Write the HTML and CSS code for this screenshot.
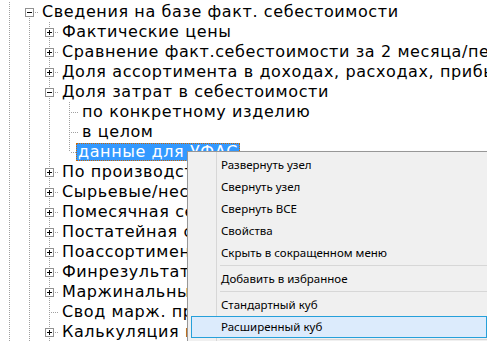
FILE: index.html
```html
<!DOCTYPE html>
<html lang="ru">
<head>
  <meta charset="UTF-8">
  <title>Дерево отчетов</title>
  <link rel="stylesheet" href="styles.css">
</head>
<body>
  <div class="tree">
    <div class="row"><span class="g v"></span><span class="g first"><i class="box minus"></i></span><span class="label">Сведения на базе факт. себестоимости</span></div>
    <div class="row"><span class="g v"></span><span class="g v"></span><span class="g tee"><i class="box plus"></i></span><span class="label">Фактические цены</span></div>
    <div class="row"><span class="g v"></span><span class="g v"></span><span class="g tee"><i class="box plus"></i></span><span class="label">Сравнение факт.себестоимости за 2 месяца/периода</span></div>
    <div class="row"><span class="g v"></span><span class="g v"></span><span class="g tee"><i class="box plus"></i></span><span class="label">Доля ассортимента в доходах, расходах, прибыли по месяцам</span></div>
    <div class="row"><span class="g v"></span><span class="g v"></span><span class="g tee"><i class="box minus"></i></span><span class="label">Доля затрат в себестоимости</span></div>
    <div class="row"><span class="g v"></span><span class="g v"></span><span class="g v"></span><span class="g tee"></span><span class="label">по конкретному изделию</span></div>
    <div class="row"><span class="g v"></span><span class="g v"></span><span class="g v"></span><span class="g tee"></span><span class="label">в целом</span></div>
    <div class="row"><span class="g v"></span><span class="g v"></span><span class="g v"></span><span class="g end"></span><span class="label selected">данные для УФАС</span></div>
    <div class="row"><span class="g v"></span><span class="g v"></span><span class="g tee"><i class="box plus"></i></span><span class="label">По производству</span></div>
    <div class="row"><span class="g v"></span><span class="g v"></span><span class="g tee"><i class="box plus"></i></span><span class="label">Сырьевые/несырьевые затраты</span></div>
    <div class="row"><span class="g v"></span><span class="g v"></span><span class="g tee"><i class="box plus"></i></span><span class="label">Помесячная себестоимость</span></div>
    <div class="row"><span class="g v"></span><span class="g v"></span><span class="g tee"><i class="box plus"></i></span><span class="label">Постатейная себестоимость</span></div>
    <div class="row"><span class="g v"></span><span class="g v"></span><span class="g tee"><i class="box plus"></i></span><span class="label">Поассортиментная себестоимость</span></div>
    <div class="row"><span class="g v"></span><span class="g v"></span><span class="g tee"><i class="box plus"></i></span><span class="label">Финрезультат/рентабельность</span></div>
    <div class="row"><span class="g v"></span><span class="g v"></span><span class="g tee"><i class="box plus"></i></span><span class="label">Маржинальный доход</span></div>
    <div class="row"><span class="g v"></span><span class="g v"></span><span class="g tee"></span><span class="label">Свод марж. прибыли</span></div>
    <div class="row"><span class="g v"></span><span class="g v"></span><span class="g tee"><i class="box plus"></i></span><span class="label">Калькуляция в разрезе статей</span></div>
  </div>

  <ul class="menu">
    <li class="item">Развернуть узел</li>
    <li class="item">Свернуть узел</li>
    <li class="item">Свернуть ВСЕ</li>
    <li class="item">Свойства</li>
    <li class="item">Скрыть в сокращенном меню</li>
    <li class="sep"></li>
    <li class="item">Добавить в избранное</li>
    <li class="sep"></li>
    <li class="item">Стандартный куб</li>
    <li class="item hover">Расширенный куб</li>
    <li class="sep"></li>
    <li class="item">Удалить</li>
  </ul>
</body>
</html>
```

FILE: styles.css
```css
body {
  margin: 0;
  background: #fff;
  overflow: hidden;
}

.tree {
  padding-top: 2px;
  font-family: "DejaVu Sans", Verdana, sans-serif;
  font-size: 16px;
  letter-spacing: 0.6px;
  color: #000;
}

.row {
  display: flex;
  height: 20px;
  white-space: nowrap;
}

/* guide cells: dotted tree lines drawn as backgrounds */
.g {
  flex: none;
  width: 20px;
  height: 20px;
  display: flex;
  align-items: flex-start;
}

.v {
  background: repeating-linear-gradient(to bottom, #a0a0a0 0 1px, transparent 1px 2px) 9px 0 / 1px 100% no-repeat;
}

.tee {
  background:
    repeating-linear-gradient(to bottom, #a0a0a0 0 1px, transparent 1px 2px) 9px 0 / 1px 100% no-repeat,
    repeating-linear-gradient(to right, #a0a0a0 0 1px, transparent 1px 2px) 11px 10px / 8px 1px no-repeat;
}

.end {
  background:
    repeating-linear-gradient(to bottom, #a0a0a0 0 1px, transparent 1px 2px) 9px 0 / 1px 10px no-repeat,
    repeating-linear-gradient(to right, #a0a0a0 0 1px, transparent 1px 2px) 11px 10px / 8px 1px no-repeat;
}

.first {
  background:
    repeating-linear-gradient(to bottom, #a0a0a0 0 1px, transparent 1px 2px) 9px 10px / 1px 10px no-repeat,
    repeating-linear-gradient(to right, #a0a0a0 0 1px, transparent 1px 2px) 11px 10px / 8px 1px no-repeat;
}

.box {
  width: 7px;
  height: 7px;
  margin: 6px 0 0 5px;
  border: 1px solid #919191;
  background-color: #fff;
  background-repeat: no-repeat;
}

.minus {
  background-image: linear-gradient(#000, #000);
  background-position: 1px 3px;
  background-size: 5px 1px;
}

.plus {
  background-image: linear-gradient(#000, #000), linear-gradient(#000, #000);
  background-position: 1px 3px, 3px 1px;
  background-size: 5px 1px, 1px 5px;
}

.label {
  line-height: 18px;
  height: 18px;
  margin-top: 1px;
  padding: 0 2px;
}

.selected {
  margin-left: -4px;
  background: #3399ff;
  color: #fff;
  outline: 1px dotted #cc6600;
  outline-offset: -1px;
}

/* context menu */
.menu {
  position: absolute;
  left: 187px;
  top: 151px;
  width: 298px;
  margin: 0;
  padding: 2px;
  list-style: none;
  background:
    linear-gradient(#d7d7d7, #d7d7d7) 28px 0 / 1px 100% no-repeat,
    #f0f0f0;
  border: 1px solid #979797;
  border-right-color: #c8c8c8;
  font-family: "Noto Sans", "Liberation Sans", sans-serif;
  font-size: 11.5px;
  color: #000;
  box-shadow: 1px 1px 2px rgba(0, 0, 0, 0.15);
}

.item {
  height: 22px;
  line-height: 20px;
  padding-left: 29px;
  border: 1px solid transparent;
  margin: 0 1px;
  box-sizing: border-box;
}

.hover {
  background: #dcebfc;
  border-color: #26a0da;
}

.sep {
  height: 4px;
  margin-left: 30px;
  background: linear-gradient(#d7d7d7, #d7d7d7) 0 1px / 100% 1px no-repeat;
}
```
